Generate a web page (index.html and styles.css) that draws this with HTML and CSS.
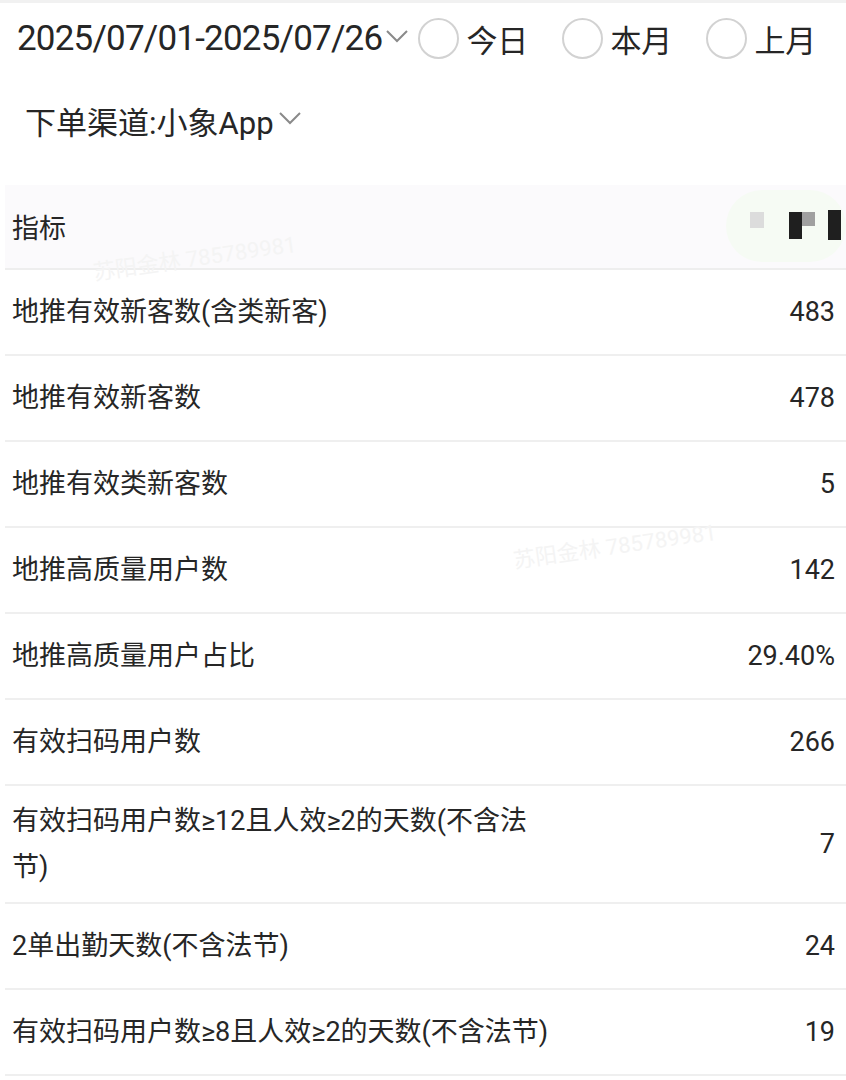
FILE: index.html
```html
<!DOCTYPE html>
<html lang="zh-CN">
<head>
<meta charset="utf-8">
<title>数据指标</title>
<link rel="stylesheet" href="styles.css">
</head>
<body>
<div class="topline"></div>
<div class="filters">
  <div class="filter-row">
    <span class="date">2025/07/01-2025/07/26</span>
    <svg class="chev chev-date" viewBox="0 0 24 14" width="24" height="14"><polyline points="2,2 12,12 22,2" fill="none" stroke="#8a8a8a" stroke-width="2"/></svg>
    <label class="radio"><span class="circle"></span><span class="radio-text">今日</span></label>
    <label class="radio"><span class="circle"></span><span class="radio-text">本月</span></label>
    <label class="radio last"><span class="circle"></span><span class="radio-text">上月</span></label>
  </div>
  <div class="filter-row channel">
    <span class="channel-text">下单渠道:小象App</span>
    <svg class="chev" viewBox="0 0 24 14" width="24" height="14"><polyline points="2,2 12,12 22,2" fill="none" stroke="#8a8a8a" stroke-width="2"/></svg>
  </div>
</div>

<div class="table">
  <div class="thead">
    <div class="cell-name">指标</div>
    <div class="mosaic">
      <span class="blob"></span>
      <span class="m m1"></span>
      <span class="m m2"></span>
      <span class="m m3"></span>
      <span class="m m4"></span>
    </div>
  </div>
  <div class="trow"><div class="cell-name">地推有效新客数(含类新客)</div><div class="cell-val">483</div></div>
  <div class="trow"><div class="cell-name">地推有效新客数</div><div class="cell-val">478</div></div>
  <div class="trow"><div class="cell-name">地推有效类新客数</div><div class="cell-val">5</div></div>
  <div class="trow"><div class="cell-name">地推高质量用户数</div><div class="cell-val">142</div></div>
  <div class="trow"><div class="cell-name">地推高质量用户占比</div><div class="cell-val">29.40%</div></div>
  <div class="trow"><div class="cell-name">有效扫码用户数</div><div class="cell-val">266</div></div>
  <div class="trow"><div class="cell-name">有效扫码用户数≥12且人效≥2的天数(不含法节)</div><div class="cell-val">7</div></div>
  <div class="trow"><div class="cell-name">2单出勤天数(不含法节)</div><div class="cell-val">24</div></div>
  <div class="trow"><div class="cell-name">有效扫码用户数≥8且人效≥2的天数(不含法节)</div><div class="cell-val">19</div></div>
</div>

<div class="wm wm1">苏阳金林 785789981</div>
<div class="wm wm2">苏阳金林 785789981</div>
</body>
</html>
```

FILE: styles.css
```css
* { box-sizing: border-box; }
html, body {
  margin: 0;
  padding: 0;
  background: #ffffff;
  color: #262626;
  font-family: Roboto, "Noto Sans CJK SC", "Noto Sans", sans-serif;
  overflow: hidden;
}
body { position: relative; width: 846px; }

.topline { height: 3px; background: #f1f1f1; }

.filters { padding-left: 17px; }
.filter-row {
  display: flex;
  align-items: center;
  height: 71px;
  white-space: nowrap;
}
.filter-row > * { flex-shrink: 0; }
.date {
  font-size: 35px;
  letter-spacing: -0.8px;
  color: #262626;
}
.chev { display: block; margin-left: 4px; margin-top: -6px; }
.chev-date { margin-left: 3px; margin-right: 9px; }

.radio { display: flex; align-items: center; margin-right: 34px; }
.radio.last { margin-right: 0; }
.circle {
  width: 41px;
  height: 41px;
  border: 2px solid #d2d2d2;
  border-radius: 50%;
  margin-right: 7px;
}
.radio-text { font-size: 31px; }

.channel { height: 93px; padding-left: 8px; }
.channel-text { font-size: 31px; }

.table { margin-top: 18px; margin-left: 5px; }
.thead {
  display: flex;
  align-items: center;
  justify-content: space-between;
  height: 85px;
  background: #fbfafc;
  border-bottom: 2px solid #eeeeee;
  padding-left: 7px;
  font-size: 27px;
}
.mosaic {
  position: relative;
  display: flex;
  align-items: flex-start;
  height: 30px;
  width: 100px;
}
.blob {
  position: absolute;
  left: -20px;
  top: -22px;
  width: 120px;
  height: 72px;
  border-radius: 36px;
  background: #f6fbf4;
}
.m { position: relative; display: block; }
.m1 { width: 14px; height: 16px; background: #dcdcdc; margin-left: 4px; }
.m2 { width: 13px; height: 27px; background: #1f1f1f; margin-left: 25px; }
.m3 { width: 13px; height: 14px; background: #a0a0a0; }
.m4 { width: 13px; height: 30px; background: #1f1f1f; margin-left: 13px; margin-top: -2px; }

.trow {
  display: flex;
  align-items: center;
  justify-content: space-between;
  min-height: 86px;
  padding: 12px 11px 12px 7px;
  border-bottom: 2px solid #efefef;
  font-size: 27px;
  line-height: 46px;
}
.cell-name { width: 548px; flex: 0 0 548px; }
.cell-val { text-align: right; }

.wm {
  position: absolute;
  font-size: 22px;
  color: #f4f4f4;
  transform: rotate(-8deg);
  white-space: nowrap;
  pointer-events: none;
}
.wm1 { left: 92px; top: 240px; }
.wm2 { left: 512px; top: 528px; }
```
